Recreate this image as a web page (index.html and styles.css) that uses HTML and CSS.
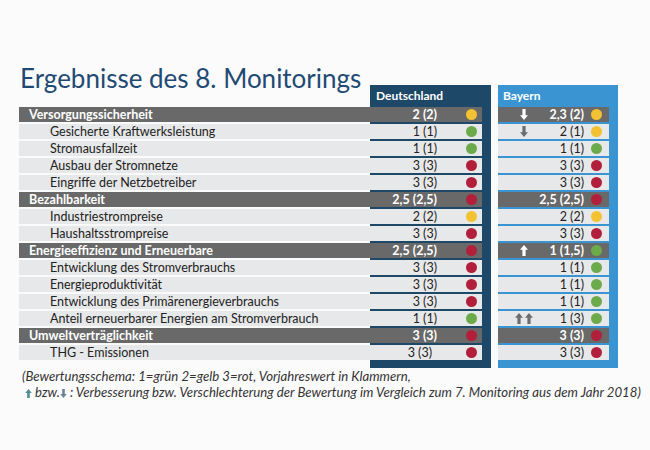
FILE: index.html
```html
<!DOCTYPE html>
<html lang="de">
<head>
<meta charset="utf-8">
<title>Ergebnisse des 8. Monitorings</title>
<link rel="stylesheet" href="styles.css">
</head>
<body>
<div class="board">
  <div class="labels">
    <h1 class="title">Ergebnisse des 8. Monitorings</h1>
    <div class="rows">
      <div class="row cat">Versorgungssicherheit</div>
      <div class="row">Gesicherte Kraftwerksleistung</div>
      <div class="row">Stromausfallzeit</div>
      <div class="row">Ausbau der Stromnetze</div>
      <div class="row">Eingriffe der Netzbetreiber</div>
      <div class="row cat">Bezahlbarkeit</div>
      <div class="row">Industriestrompreise</div>
      <div class="row">Haushaltsstrompreise</div>
      <div class="row cat">Energieeffizienz und Erneuerbare</div>
      <div class="row">Entwicklung des Stromverbrauchs</div>
      <div class="row">Energieproduktivität</div>
      <div class="row">Entwicklung des Primärenergieverbrauchs</div>
      <div class="row">Anteil erneuerbarer Energien am Stromverbrauch</div>
      <div class="row cat">Umweltverträglichkeit</div>
      <div class="row">THG - Emissionen</div>
    </div>
  </div>

  <div class="panel panel-de">
    <div class="panel-head">Deutschland</div>
    <div class="rows">
      <div class="row cat"><span class="val">2 (2)</span><span class="dot yellow"></span></div>
      <div class="row"><span class="val">1 (1)</span><span class="dot green"></span></div>
      <div class="row"><span class="val">1 (1)</span><span class="dot green"></span></div>
      <div class="row"><span class="val">3 (3)</span><span class="dot red"></span></div>
      <div class="row"><span class="val">3 (3)</span><span class="dot red"></span></div>
      <div class="row cat"><span class="val">2,5 (2,5)</span><span class="dot red"></span></div>
      <div class="row"><span class="val">2 (2)</span><span class="dot yellow"></span></div>
      <div class="row"><span class="val">3 (3)</span><span class="dot red"></span></div>
      <div class="row cat"><span class="val">2,5 (2,5)</span><span class="dot red"></span></div>
      <div class="row"><span class="val">3 (3)</span><span class="dot red"></span></div>
      <div class="row"><span class="val">3 (3)</span><span class="dot red"></span></div>
      <div class="row"><span class="val">3 (3)</span><span class="dot red"></span></div>
      <div class="row"><span class="val">1 (1)</span><span class="dot green"></span></div>
      <div class="row cat"><span class="val">3 (3)</span><span class="dot red"></span></div>
      <div class="row"><span class="val shift">3 (3)</span><span class="dot red"></span></div>
    </div>
  </div>

  <div class="panel panel-by">
    <div class="panel-head">Bayern</div>
    <div class="rows">
      <div class="row cat"><span class="arr"><svg class="ico light" viewBox="0 0 8 11"><path d="M2.4 0h3.2v6.2H8L4 11 0 6.2h2.4z"/></svg></span><span class="val">2,3 (2)</span><span class="dot yellow"></span></div>
      <div class="row"><span class="arr"><svg class="ico dark" viewBox="0 0 8 11"><path d="M2.4 0h3.2v6.2H8L4 11 0 6.2h2.4z"/></svg></span><span class="val">2 (1)</span><span class="dot yellow"></span></div>
      <div class="row"><span class="arr"></span><span class="val">1 (1)</span><span class="dot green"></span></div>
      <div class="row"><span class="arr"></span><span class="val">3 (3)</span><span class="dot red"></span></div>
      <div class="row"><span class="arr"></span><span class="val">3 (3)</span><span class="dot red"></span></div>
      <div class="row cat"><span class="arr"></span><span class="val">2,5 (2,5)</span><span class="dot red"></span></div>
      <div class="row"><span class="arr"></span><span class="val">2 (2)</span><span class="dot yellow"></span></div>
      <div class="row"><span class="arr"></span><span class="val">3 (3)</span><span class="dot red"></span></div>
      <div class="row cat"><span class="arr"><svg class="ico light" viewBox="0 0 8 11"><path d="M2.4 11h3.2V4.8H8L4 0 0 4.8h2.4z"/></svg></span><span class="val">1 (1,5)</span><span class="dot green"></span></div>
      <div class="row"><span class="arr"></span><span class="val">1 (1)</span><span class="dot green"></span></div>
      <div class="row"><span class="arr"></span><span class="val">1 (1)</span><span class="dot green"></span></div>
      <div class="row"><span class="arr"></span><span class="val">1 (1)</span><span class="dot green"></span></div>
      <div class="row"><span class="arr"><svg class="ico dark" viewBox="0 0 8 11"><path d="M2.4 11h3.2V4.8H8L4 0 0 4.8h2.4z"/></svg><svg class="ico dark" viewBox="0 0 8 11"><path d="M2.4 11h3.2V4.8H8L4 0 0 4.8h2.4z"/></svg></span><span class="val">1 (3)</span><span class="dot green"></span></div>
      <div class="row cat"><span class="arr"></span><span class="val">3 (3)</span><span class="dot red"></span></div>
      <div class="row"><span class="arr"></span><span class="val">3 (3)</span><span class="dot red"></span></div>
    </div>
  </div>
</div>

<div class="note">
  <p class="note-line">(Bewertungsschema: 1=grün 2=gelb 3=rot, Vorjahreswert in Klammern,</p>
  <p class="note-line indent"><svg class="mini up" viewBox="0 0 8 11"><path d="M2.4 11h3.2V4.8H8L4 0 0 4.8h2.4z"/></svg> bzw.<svg class="mini down" viewBox="0 0 8 11"><path d="M2.4 0h3.2v6.2H8L4 11 0 6.2h2.4z"/></svg> : Verbesserung bzw. Verschlechterung der Bewertung im Vergleich zum 7. Monitoring aus dem Jahr 2018)</p>
</div>
</body>
</html>
```

FILE: styles.css
```css
* { box-sizing: border-box; }

body {
  margin: 0;
  background: #fbfbfb;
  font-family: Lato, "Open Sans", "DejaVu Sans", sans-serif;
  color: #222;
}

.board {
  display: flex;
  align-items: flex-start;
  padding: 58px 0 0 19px;
}

.labels { width: 351px; }

.title {
  margin: 0;
  height: 49px;
  padding: 6px 0 0 1px;
  font-size: 26px;
  line-height: 28px;
  font-weight: 400;
  color: #1f4a74;
  white-space: nowrap;
}

.rows {
  display: flex;
  flex-direction: column;
  gap: 2px;
}

.row {
  height: 15px;
  display: flex;
  align-items: center;
  background: #e7e8e9;
  font-size: 12.5px;
  line-height: 15px;
  white-space: nowrap;
}

.row.cat {
  background: #696969;
  color: #fff;
  font-weight: 700;
}

.labels .row { padding-left: 31px; }
.labels .row.cat { padding-left: 10px; }

.panel {
  margin-top: 27px;
  padding: 0 9px 8px 0;
}

.panel-de {
  width: 121px;
  background: #1d4867;
}

.panel-by {
  width: 120px;
  margin-left: 7px;
  background: #3a94d2;
}

.panel-head {
  height: 22px;
  padding-left: 6px;
  color: #fff;
  font-size: 12px;
  font-weight: 700;
  line-height: 22px;
}

.panel-by .panel-head { padding-left: 5px; }

.panel-de .row {
  justify-content: flex-end;
  padding-right: 5px;
}

.panel-de .dot { margin-left: 29px; }
.panel-de .val.shift { margin-right: 5px; }

.panel-by .row { padding-right: 7px; }

.panel-by .dot { margin-left: 7px; }

.val { font-weight: 400; }
.row.cat .val { font-weight: 700; }

.panel-by .val {
  flex: 1;
  text-align: right;
}

.arr {
  width: 26px;
  margin-left: 13px;
  display: flex;
  justify-content: center;
  gap: 2px;
}

.ico {
  width: 8px;
  height: 11px;
  display: block;
}

.ico.light { fill: #fff; }
.ico.dark { fill: #6a6d70; }

.dot {
  width: 11px;
  height: 11px;
  border-radius: 50%;
  flex: none;
}

.dot.yellow { background: #f3c233; }
.dot.green { background: #6daa4b; }
.dot.red { background: #b11f3b; }

.note {
  padding-left: 22px;
  font-style: italic;
  font-size: 13.2px;
  line-height: 16px;
  color: #333;
}

.note-line { margin: 0; white-space: nowrap; }
.note-line.indent { padding-left: 3px; }

.mini {
  width: 7px;
  height: 9px;
  vertical-align: -1px;
}

.mini.up { fill: #4e8f98; }
.mini.down { fill: #6e8293; }
```
